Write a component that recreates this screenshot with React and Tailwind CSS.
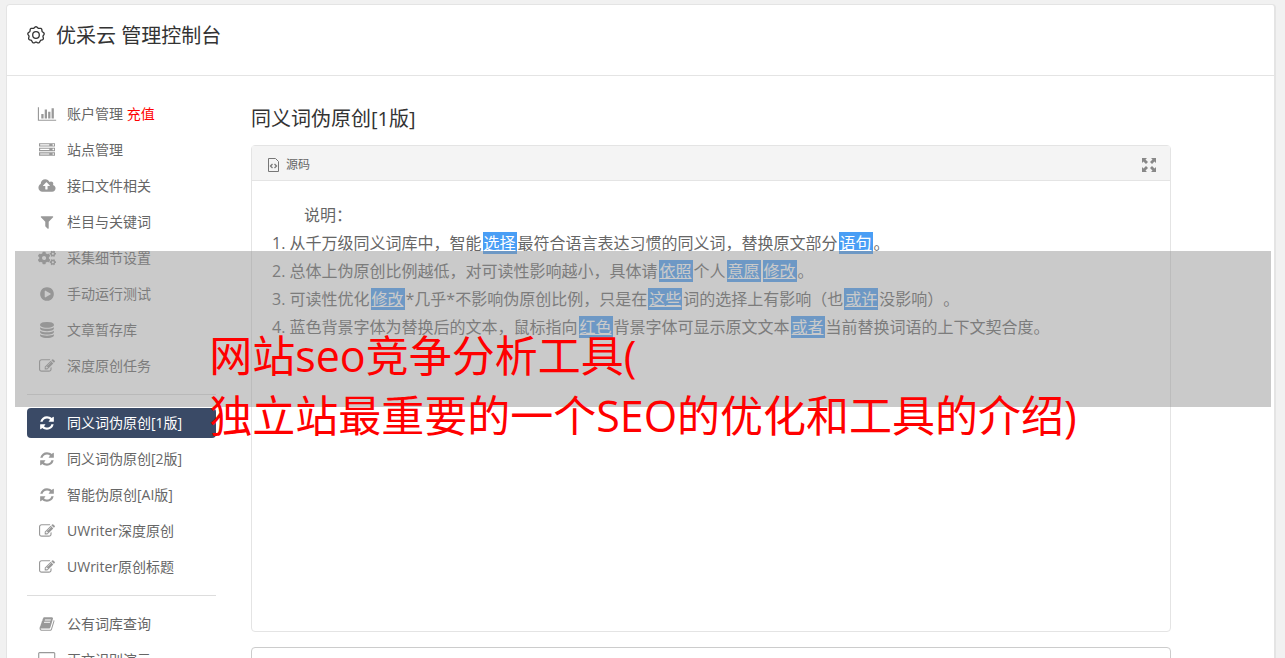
import { FaCogs } from "react-icons/fa"

function Glyph({ d, width = 1792, className = "h-4 w-4" }) {
  return (
    <svg viewBox={`0 0 ${width} 1792`} fill="currentColor" className={className} aria-hidden="true">
      <path d={d} />
    </svg>
  )
}

const paths = {
  chart:
    "M640 896v512h-256v-512h256zm384-512v1024h-256v-1024h256zm1024 1152v128h-2048v-1536h128v1408h1920zm-640-896v768h-256v-768h256zm384-384v1152h-256v-1152h256z",
  server:
    "M128 1408h1024v-128h-1024v128zm0-512h1024v-128h-1024v128zm1568 448q0-40-28-68t-68-28-68 28-28 68 28 68 68 28 68-28 28-68zm-1568-960h1024v-128h-1024v128zm1568 448q0-40-28-68t-68-28-68 28-28 68 28 68 68 28 68-28 28-68zm0-512q0-40-28-68t-68-28-68 28-28 68 28 68 68 28 68-28 28-68zm96 832v384h-1792v-384h1792zm0-512v384h-1792v-384h1792zm0-512v384h-1792v-384h1792z",
  cloud:
    "M1280 864q0-14-9-23l-352-352q-9-9-23-9t-23 9l-351 351q-10 12-10 24 0 14 9 23t23 9h224v352q0 13 9.5 22.5t22.5 9.5h192q13 0 22.5-9.5t9.5-22.5v-352h224q13 0 22.5-9.5t9.5-22.5zm640 288q0 159-112.5 271.5t-271.5 112.5h-1088q-185 0-316.5-131.5t-131.5-316.5q0-130 70-240t188-165q-2-30-2-43 0-212 150-362t362-150q156 0 285.5 87t188.5 231q71-62 166-62 106 0 181 75t75 181q0 76-41 138 130 31 213.5 135.5t83.5 238.5z",
  filter:
    "M1595 295q17 41-14 70l-493 493v742q0 42-39 59-13 5-25 5-27 0-45-19l-256-256q-19-19-19-45v-486l-493-493q-31-29-14-70 17-39 59-39h1280q42 0 59 39z",
  play:
    "M896 128q209 0 385.5 103t279.5 279.5 103 385.5-103 385.5-279.5 279.5-385.5 103-385.5-103-279.5-279.5-103-385.5 103-385.5 279.5-279.5 385.5-103zm384 823q32-18 32-55t-32-55l-544-320q-31-19-64-1-32 19-32 56v640q0 37 32 56 16 8 32 8 17 0 32-9z",
  database:
    "M896 768q237 0 443-43t325-127v170q0 69-103 128t-280 93.5-385 34.5-385-34.5-280-93.5-103-128v-170q119 84 325 127t443 43zm0 768q237 0 443-43t325-127v170q0 69-103 128t-280 93.5-385 34.5-385-34.5-280-93.5-103-128v-170q119 84 325 127t443 43zm0-384q237 0 443-43t325-127v170q0 69-103 128t-280 93.5-385 34.5-385-34.5-280-93.5-103-128v-170q119 84 325 127t443 43zm0-1152q208 0 385 34.5t280 93.5 103 128v128q0 69-103 128t-280 93.5-385 34.5-385-34.5-280-93.5-103-128v-128q0-69 103-128t280-93.5 385-34.5z",
  pencil:
    "M888 1184l116-116-152-152-116 116v56h96v96h56zm440-720q-16-16-33 1l-350 350q-17 17-1 33t33-1l350-350q17-17 1-33zm80 594v190q0 119-84.5 203.5t-203.5 84.5h-832q-119 0-203.5-84.5t-84.5-203.5v-832q0-119 84.5-203.5t203.5-84.5h832q63 0 117 25 15 7 18 23 3 17-9 29l-49 49q-14 14-32 8-23-6-45-6h-832q-66 0-113 47t-47 113v832q0 66 47 113t113 47h832q66 0 113-47t47-113v-126q0-13 9-22l64-64q15-15 35-7t20 29zm-96-738l288 288-672 672h-288v-288zm444 132l-92 92-288-288 92-92q28-28 68-28t68 28l152 152q28 28 28 68t-28 68z",
  refresh:
    "M1639 1056q0 5-1 7-64 268-268 434.5t-478 166.5q-146 0-282.5-55t-243.5-157l-129 129q-19 19-45 19t-45-19-19-45v-448q0-26 19-45t45-19h448q26 0 45 19t19 45-19 45l-137 137q71 66 161 102t187 36q134 0 250-65t186-179q11-17 53-117 8-23 30-23h192q13 0 22.5 9.5t9.5 22.5zm25-800v448q0 26-19 45t-45 19h-448q-26 0-45-19t-19-45 19-45l138-138q-148-137-349-137-134 0-250 65t-186 179q-11 17-53 117-8 23-30 23h-199q-13 0-22.5-9.5t-9.5-22.5v-7q65-268 270-434.5t480-166.5q146 0 284 55.5t245 156.5l130-129q19-19 45-19t45 19 19 45z",
  book:
    "M1703 478q40 57 18 129l-275 906q-19 64-76.5 107.5t-122.5 43.5h-923q-77 0-148.5-53.5t-99.5-131.5q-24-67-2-127 0-4 3-27t4-37q1-8-3-21.5t-3-19.5q2-11 8-21t16.5-23.5 16.5-23.5q23-38 45-91.5t30-91.5q3-10 .5-30t-.5-28q3-11 17-28t17-23q21-36 42-92t25-90q1-9-2.5-32t.5-28q4-13 22-30.5t22-22.5q19-26 42.5-84.5t27.5-96.5q1-8-3-25.5t-2-26.5q2-8 9-18t18-23 17-21q8-12 16.5-30.5t15-35 16-36 19.5-32 26.5-23.5 36-11.5 47.5 5.5l-1 3q38-9 51-9h761q74 0 114 56t18 130l-274 906q-36 119-71.5 153.5t-128.5 34.5h-869q-27 0-38 15-11 16-1 43 24 70 144 70h923q29 0 56-15.5t35-41.5l300-987q7-22 5-57 38 15 59 43zm-1064 2q-4 13 2 22.5t20 9.5h608q13 0 25.5-9.5t16.5-22.5l21-64q4-13-2-22.5t-20-9.5h-608q-13 0-25.5 9.5t-16.5 22.5zm-83 256q-4 13 2 22.5t20 9.5h608q13 0 25.5-9.5t16.5-22.5l21-64q4-13-2-22.5t-20-9.5h-608q-13 0-25.5 9.5t-16.5 22.5z",
  desktop:
    "M1728 992v-832q0-13-9.500-22.500t-22.500-9.500h-1600q-13 0-22.500 9.500t-9.500 22.500v832q0 13 9.500 22.500t22.500 9.500h1600q13 0 22.500-9.500t9.500-22.500zm128-832v1088q0 66-47 113t-113 47h-544q0 37 16 77.500t32 71 16 43.500q0 26-19 45t-45 19h-512q-26 0-45-19t-19-45q0-14 16-44t32-70 16-78h-544q-66 0-113-47t-47-113v-1088q0-66 47-113t113-47h1600q66 0 113 47t47 113z",
}

const menu = [
  [
    { label: "账户管理", extra: "充值", icon: <Glyph d={paths.chart} width={2048} className="h-4 w-5" /> },
    { label: "站点管理", icon: <Glyph d={paths.server} /> },
    { label: "接口文件相关", icon: <Glyph d={paths.cloud} width={1920} className="h-4 w-[18px]" /> },
    { label: "栏目与关键词", icon: <Glyph d={paths.filter} /> },
    { label: "采集细节设置", icon: <FaCogs className="h-4 w-[18px]" /> },
    { label: "手动运行测试", icon: <Glyph d={paths.play} /> },
    { label: "文章暂存库", icon: <Glyph d={paths.database} /> },
    { label: "深度原创任务", icon: <Glyph d={paths.pencil} /> },
  ],
  [
    { label: "同义词伪原创[1版]", active: true, icon: <Glyph d={paths.refresh} /> },
    { label: "同义词伪原创[2版]", icon: <Glyph d={paths.refresh} /> },
    { label: "智能伪原创[AI版]", icon: <Glyph d={paths.refresh} /> },
    { label: "UWriter深度原创", icon: <Glyph d={paths.pencil} /> },
    { label: "UWriter原创标题", icon: <Glyph d={paths.pencil} /> },
  ],
  [
    { label: "公有词库查询", icon: <Glyph d={paths.book} /> },
    { label: "正文识别演示", icon: <Glyph d={paths.desktop} width={1856} className="h-4 w-[18px]" /> },
  ],
]

// Scalloped outline of the header gear, nine lobes around the centre
const gearPoints = Array.from({ length: 108 }, (_, i) => {
  const a = (i / 108) * Math.PI * 2
  const r = 7.7 + 0.6 * Math.cos(a * 9 + Math.PI / 2)
  return `${(9 + r * Math.cos(a)).toFixed(2)},${(9 + r * Math.sin(a)).toFixed(2)}`
}).join(" ")

function GearIcon() {
  return (
    <svg viewBox="0 0 18 18" fill="none" stroke="currentColor" strokeWidth="1.3" className="h-[18px] w-[18px]" aria-hidden="true">
      <polygon points={gearPoints} />
      <circle cx="9" cy="9" r="3.3" />
    </svg>
  )
}

function SourceIcon() {
  return (
    <svg viewBox="0 0 11 14" fill="none" stroke="currentColor" className="h-[14px] w-[11px] text-[#777]" aria-hidden="true">
      <path d="M.5 .5h7l3 3v10h-10z" />
      <path d="M4.500 6l-2 2 2 2M6.500 6l2 2-2 2" strokeWidth="1.3" />
    </svg>
  )
}

function ExpandIcon() {
  return (
    <svg viewBox="0 0 14 14" fill="currentColor" className="h-[14px] w-[14px]" aria-hidden="true">
      <path d="M0 0h5L3.500 1.500 6 4 4 6 1.500 3.500 0 5zM14 0v5l-1.500-1.500L10 6 8 4l2.500-2.500L9 0zM0 14V9l1.500 1.500L4 8l2 2-2.500 2.500L5 14zM14 14H9l1.500-1.500L8 10l2-2 2.500 2.500L14 9z" />
    </svg>
  )
}

function Word({ children }) {
  return (
    <span className="mx-px bg-[#499ef5] px-px text-white underline">{children}</span>
  )
}

function MenuItem({ item }) {
  return (
    <li>
      <a
        href="#"
        className={
          item.active
            ? "flex h-[30px] items-center gap-[10px] rounded bg-[#3a4a66] px-[10px] text-white"
            : "flex h-[30px] items-center gap-[10px] rounded px-[10px] text-[#666]"
        }
      >
        <span
          className={
            item.active
              ? "flex w-5 shrink-0 justify-center text-white"
              : "flex w-5 shrink-0 justify-center text-[#999]"
          }
        >
          {item.icon}
        </span>
        <span className="whitespace-nowrap">
          {item.label}
          {item.extra && <span className="text-[#f00]"> {item.extra}</span>}
        </span>
      </a>
    </li>
  )
}

export default function App() {
  return (
    <div className="relative h-screen overflow-hidden bg-[#f1f1f1] px-[6px] pt-1 pr-[9px] font-['Open_Sans','Noto_Sans_CJK_SC',sans-serif] text-sm text-[#666] [text-spacing-trim:space-all]">
      <div className="min-h-full rounded-t border border-r-2 border-[#e4e4e4] bg-white">
        <header className="flex h-[71px] items-start gap-[11px] border-b border-[#e4e4e4] px-5 pt-[17px] text-[#333]">
          <span className="flex h-[26px] items-center">
            <GearIcon />
          </span>
          <h1 className="text-xl">优采云 管理控制台</h1>
        </header>

        <div className="flex gap-[35px] px-5 pt-[23px]">
          <nav className="flex w-[189px] shrink-0 flex-col">
            {menu.map((group, i) => (
              <ul
                key={i}
                className={
                  i === 0
                    ? "flex flex-col gap-[6px]"
                    : "mt-[13px] flex flex-col gap-[6px] border-t border-[#ddd] pt-[13px]"
                }
              >
                {group.map((item) => (
                  <MenuItem key={item.label} item={item} />
                ))}
              </ul>
            ))}
          </nav>

          <main className="flex max-w-[920px] flex-1 flex-col pt-[6px]">
            <h2 className="text-xl text-[#333]">同义词伪原创[1版]</h2>

            <section className="mt-3 rounded border border-[#e4e4e4]">
              <div className="flex h-[35px] items-center justify-between border-b border-[#e4e4e4] bg-[#f4f4f4] px-[14px] pt-[3px] pl-4">
                <button type="button" className="flex items-center gap-[7px] text-xs">
                  <SourceIcon />
                  源码
                </button>
                <button type="button" aria-label="全屏" className="text-[#888]">
                  <ExpandIcon />
                </button>
              </div>
              <div className="min-h-[450px] px-5 py-5 text-base leading-7">
                <p className="indent-8">说明：</p>
                <ol className="list-inside list-decimal">
                  <li>
                    从千万级同义词库中，智能<Word>选择</Word>最符合语言表达习惯的同义词，替换原文部分<Word>语句</Word>。
                  </li>
                  <li>
                    总体上伪原创比例越低，对可读性影响越小，具体请<Word>依照</Word>个人<Word>意愿</Word><Word>修改</Word>。
                  </li>
                  <li>
                    可读性优化<Word>修改</Word>*几乎*不影响伪原创比例，只是在<Word>这些</Word>词的选择上有影响（也<Word>或许</Word>没影响）。
                  </li>
                  <li>
                    蓝色背景字体为替换后的文本，鼠标指向<Word>红色</Word>背景字体可显示原文文本<Word>或者</Word>当前替换词语的上下文契合度。
                  </li>
                </ol>
              </div>
            </section>

            <textarea
              aria-label="原文内容"
              className="mt-[15px] h-40 w-full resize-none rounded border border-[#ccc] p-3"
            />
          </main>
        </div>
      </div>

      {/* 覆盖标题 */}
      <div className="absolute top-[251px] right-[14px] left-[15px] flex h-[156px] justify-center bg-[#929292]/49 pt-[75px]">
        <p className="w-max text-[43px] leading-[60px] whitespace-nowrap text-[#f00]">
          网站seo竞争分析工具(
          <br />
          独立站最重要的一个SEO的优化和工具的介绍)
        </p>
      </div>
    </div>
  )
}
